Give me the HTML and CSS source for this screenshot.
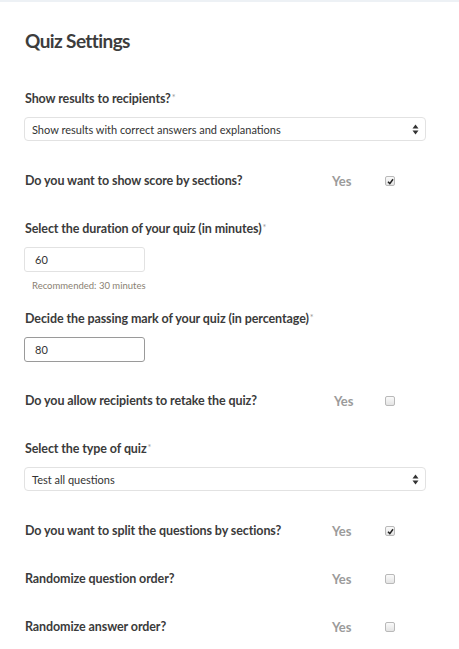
FILE: index.html
```html
<!DOCTYPE html>
<html>
<head>
<meta charset="utf-8">
<link rel="stylesheet" href="styles.css">
</head>
<body>
<div class="topbar"></div>
<main class="settings">
  <h1 class="title">Quiz Settings</h1>

  <section class="group first">
    <div class="label">Show results to recipients?<span class="req">*</span></div>
    <div class="select">
      <span>Show results with correct answers and explanations</span>
      <svg class="arrows" width="7" height="11" viewBox="0 0 7 11"><path d="M3.5 0.5 L6.5 4.5 H0.5 Z" fill="#333"/><path d="M3.5 10.5 L6.5 6.5 H0.5 Z" fill="#333"/></svg>
    </div>
  </section>

  <section class="toggle">
    <div class="label">Do you want to show score by sections?</div>
    <span class="yes">Yes</span>
    <span class="check on"><svg width="7" height="7" viewBox="0 0 7 7"><path d="M1 3.8 L2.8 5.6 L6 1.2" stroke="#222" stroke-width="1.5" fill="none"/></svg></span>
  </section>

  <section class="group">
    <div class="label">Select the duration of your quiz (in minutes)<span class="req">*</span></div>
    <div class="input">60</div>
    <div class="hint">Recommended: 30 minutes</div>
  </section>

  <section class="group">
    <div class="label">Decide the passing mark of your quiz (in percentage)<span class="req">*</span></div>
    <div class="input focus">80</div>
  </section>

  <section class="toggle alt">
    <div class="label">Do you allow recipients to retake the quiz?</div>
    <span class="yes">Yes</span>
    <span class="check"></span>
  </section>

  <section class="group">
    <div class="label">Select the type of quiz<span class="req">*</span></div>
    <div class="select">
      <span>Test all questions</span>
      <svg class="arrows" width="7" height="11" viewBox="0 0 7 11"><path d="M3.5 0.5 L6.5 4.5 H0.5 Z" fill="#333"/><path d="M3.5 10.5 L6.5 6.5 H0.5 Z" fill="#333"/></svg>
    </div>
  </section>

  <section class="toggle">
    <div class="label">Do you want to split the questions by sections?</div>
    <span class="yes">Yes</span>
    <span class="check on"><svg width="7" height="7" viewBox="0 0 7 7"><path d="M1 3.8 L2.8 5.6 L6 1.2" stroke="#222" stroke-width="1.5" fill="none"/></svg></span>
  </section>

  <section class="toggle">
    <div class="label">Randomize question order?</div>
    <span class="yes">Yes</span>
    <span class="check"></span>
  </section>

  <section class="toggle">
    <div class="label">Randomize answer order?</div>
    <span class="yes">Yes</span>
    <span class="check"></span>
  </section>
</main>
</body>
</html>
```

FILE: styles.css
```css
html, body {
  margin: 0;
  padding: 0;
  background: #fff;
}
body {
  font-family: "Lato", "Open Sans", sans-serif;
  color: #3b3b3b;
}
.topbar {
  height: 2px;
  background: #edf1f5;
}
.settings {
  width: 402px;
  padding: 0 0 0 24px;
  display: flex;
  flex-direction: column;
}
.title {
  margin: 27px 0 0 1px;
  font-size: 19px;
  line-height: 24px;
  font-weight: 700;
  color: #3d3d3d;
  letter-spacing: -0.6px;
}
.label {
  font-size: 12.5px;
  line-height: 16px;
  font-weight: 700;
  color: #3b3b3b;
  letter-spacing: -0.1px;
  padding-left: 1px;
}
.req {
  color: #9a9a9a;
  font-size: 9px;
  vertical-align: top;
  position: relative;
  top: -1px;
  margin-left: 1px;
  font-weight: 400;
}
.group {
  display: flex;
  flex-direction: column;
  margin-top: 32px;
}
.group.first {
  margin-top: 38px;
}
.group .label {
  margin-bottom: 10px;
}
.select {
  height: 24px;
  box-sizing: border-box;
  border: 1px solid #e2e2e2;
  border-radius: 4px;
  display: flex;
  align-items: center;
  justify-content: space-between;
  padding: 0 6px 0 7px;
  font-size: 11px;
  color: #333;
}
.arrows {
  display: block;
}
.input {
  width: 121px;
  height: 25px;
  box-sizing: border-box;
  border: 1px solid #e2e2e2;
  border-radius: 3px;
  font-size: 11px;
  color: #333;
  display: flex;
  align-items: center;
  padding-left: 10px;
}
.input.focus {
  border-color: #9a9a9a;
}
.hint {
  margin-top: 8px;
  margin-bottom: -13px;
  padding-left: 8px;
  font-size: 9.5px;
  line-height: 12px;
  color: #8a7f72;
}
.toggle {
  display: grid;
  grid-template-columns: 308px 53px 10px;
  align-items: center;
  margin-top: 32px;
  height: 16px;
}
.toggle.alt {
  grid-template-columns: 310px 51px 10px;
  margin-top: 31px;
}
.yes {
  font-size: 13px;
  font-weight: 700;
  color: #9b9b9b;
  letter-spacing: -0.1px;
}
.check {
  width: 8px;
  height: 8px;
  border: 1px solid #b9b9b9;
  border-radius: 2px;
  background: linear-gradient(#fafafa, #e4e4e4);
  display: flex;
  align-items: center;
  justify-content: center;
}
.check svg {
  display: block;
}
```
